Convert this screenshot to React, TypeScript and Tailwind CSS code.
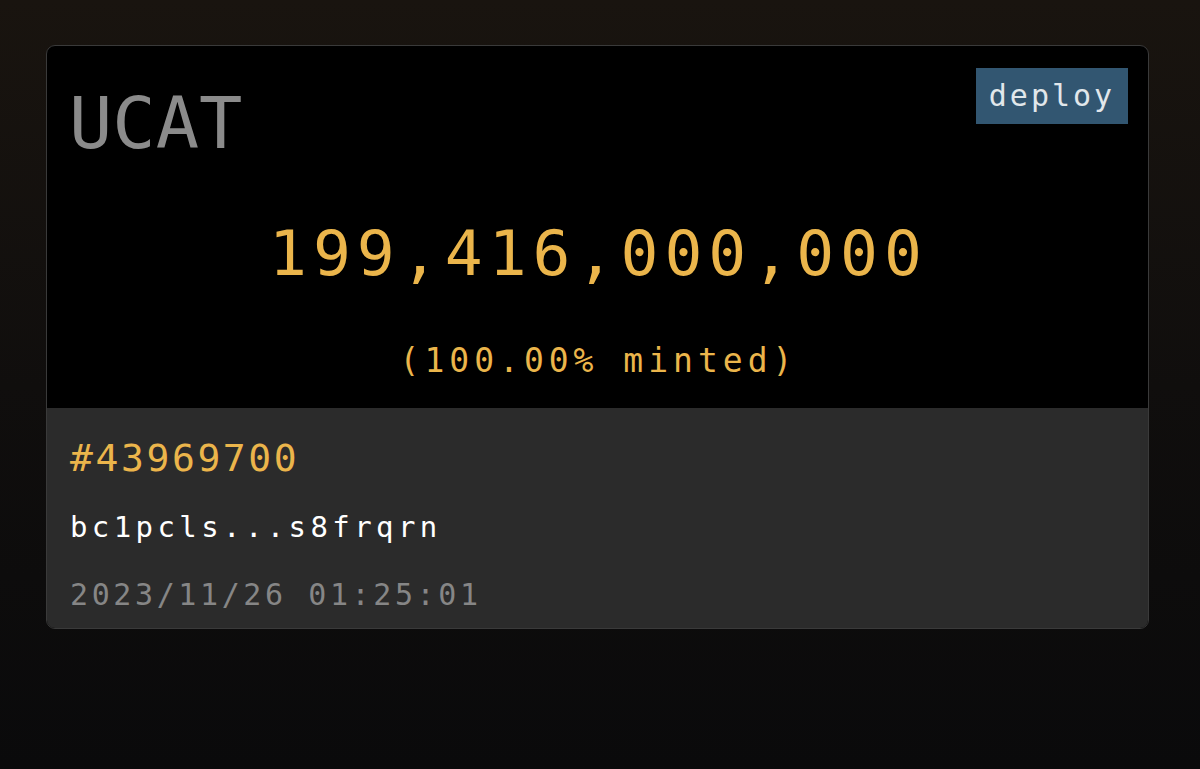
const mono = { fontFamily: '"DejaVu Sans Mono", "Liberation Mono", monospace' };

const App = () => {
  return (
    <div
      className="min-h-[769px] w-full bg-gradient-to-b from-[#19140f] via-[#100e0d] to-[#0a0a0b] pt-[45px] pl-[46px]"
      style={mono}
    >
      <div className="w-[1103px] overflow-hidden rounded-[9px] border border-[#3a3a3a] bg-black">
        <div className="flex flex-col pl-[22px] pr-[20px] pt-[22px] pb-[31px]">
          <div className="flex flex-row items-start justify-between">
            <div className="mt-[19px] text-[72px] leading-none text-[#8b8b8b]">UCAT</div>
            <div className="flex h-[56px] w-[152px] items-center justify-center bg-[#325671] text-[30px] leading-none tracking-[3px] text-[#e1e7eb]">
              deploy
            </div>
          </div>
          <div className="mt-[63px] text-center text-[63px] leading-none tracking-[6px] text-[#ebb54b]">
            199,416,000,000
          </div>
          <div className="mt-[59px] text-center text-[33px] leading-none tracking-[5px] text-[#ebb54b]">
            (100.00% minted)
          </div>
        </div>
        <div className="flex flex-col bg-[#2b2b2b] pl-[23px] pt-[31px] pb-[18px]">
          <div className="text-[38px] leading-none tracking-[2.6px] text-[#ebb54b]">#43969700</div>
          <div className="mt-[36px] text-[29px] leading-none tracking-[4.4px] text-white">
            bc1pcls...s8frqrn
          </div>
          <div className="mt-[38px] text-[30px] leading-none tracking-[3.6px] text-[#868686]">
            2023/11/26 01:25:01
          </div>
        </div>
      </div>
    </div>
  );
};

export default App;
